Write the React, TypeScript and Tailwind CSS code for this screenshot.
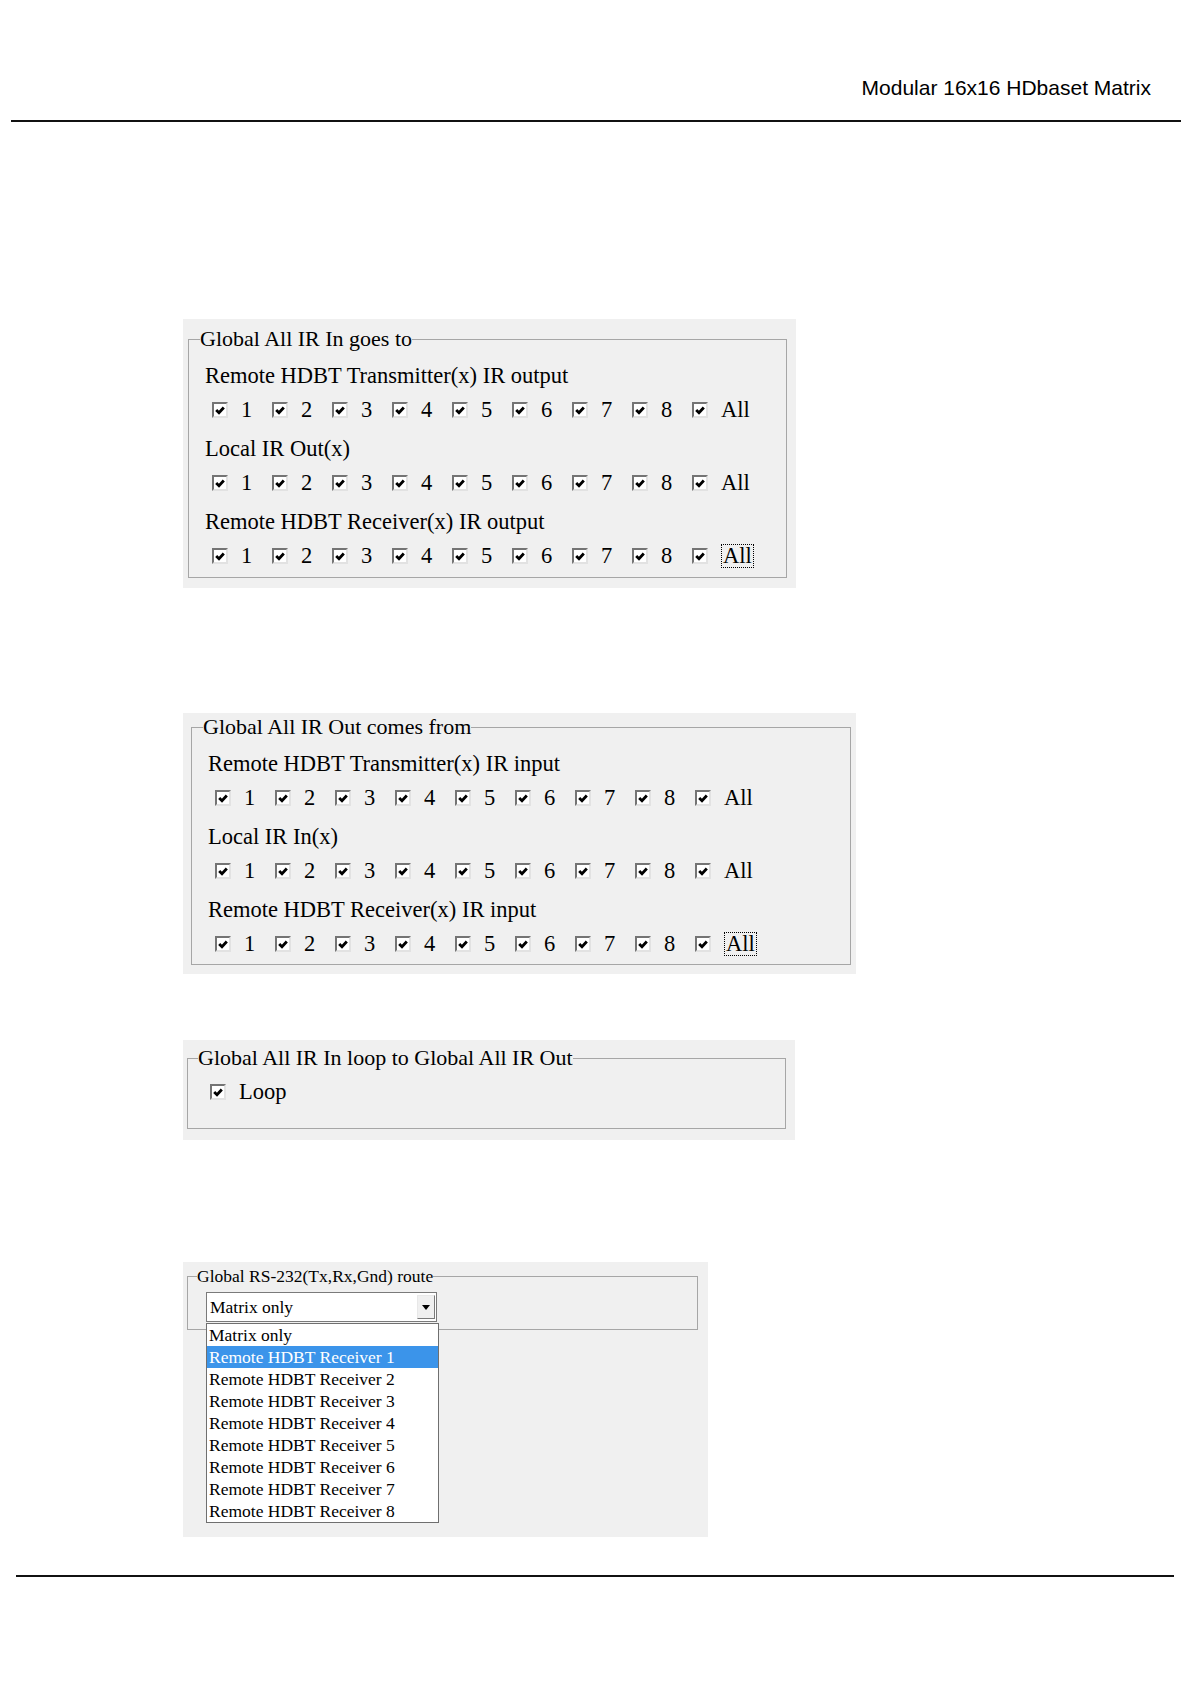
import React from "react";

const items = ["1", "2", "3", "4", "5", "6", "7", "8", "All"];

function Box() {
  return (
    <span className="inline-flex h-[16px] w-[16px] shrink-0 items-center justify-center border-2 border-t-[#747474] border-l-[#747474] border-r-[#e2e2e2] border-b-[#e2e2e2] bg-white">
      <svg width="10" height="9" viewBox="0 0 10 9">
        <path d="M1.2 4 L4 6.8 L8.8 1.5" stroke="#000" strokeWidth="2.8" fill="none" />
      </svg>
    </span>
  );
}

function CheckRow({ focus }: { focus?: boolean }) {
  return (
    <div className="flex h-[34px] items-center pl-[12px]">
      {items.map((it) => (
        <div key={it} className="flex w-[60px] items-center gap-[13px]">
          <Box />
          {it === "All" && focus ? (
            <span className="border border-dotted border-black px-[1px] leading-[22px]">All</span>
          ) : (
            <span className="leading-[22px]">{it}</span>
          )}
        </div>
      ))}
    </div>
  );
}

function Group({ title, focus }: { title: string; focus?: boolean }) {
  return (
    <div>
      <div className="flex h-[34px] items-center pl-[5px]">{title}</div>
      <CheckRow focus={focus} />
    </div>
  );
}

export default function App() {
  return (
    <div className="min-h-[1684px] w-[1191px] bg-white font-['Liberation_Serif','Times_New_Roman',serif] text-black">
      {/* header */}
      <div className="pt-[76px]">
        <div className="pr-[40px] text-right font-['Liberation_Sans',Arial,sans-serif] text-[21px] leading-[24px]">
          Modular 16x16 HDbaset Matrix
        </div>
      </div>
      <div className="ml-[11px] mt-[20px] h-[2px] w-[1170px] bg-[#111]" />

      <div className="pl-[183px]">
        {/* Panel 1 */}
        <div className="mt-[197px] w-[613px] bg-[#f0f0f0] pb-[10px] pl-[5px] pr-[9px] pt-[8px] text-[22.5px]">
          <fieldset className="border border-[#a6a6a6] pb-[4px] pl-[11px]">
            <legend className="text-[22px] leading-[24px]">Global All IR In goes to</legend>
            <div className="flex flex-col gap-[5px] pt-[8px]">
              <Group title="Remote HDBT Transmitter(x) IR output" />
              <Group title="Local IR Out(x)" />
              <Group title="Remote HDBT Receiver(x) IR output" focus />
            </div>
          </fieldset>
        </div>

        {/* Panel 2 */}
        <div className="mt-[125px] w-[673px] bg-[#f0f0f0] pb-[9px] pl-[8px] pr-[5px] pt-[2px] text-[22.5px]">
          <fieldset className="border border-[#a6a6a6] pb-[3px] pl-[11px]">
            <legend className="text-[22px] leading-[24px]">Global All IR Out comes from</legend>
            <div className="flex flex-col gap-[5px] pt-[8px]">
              <Group title="Remote HDBT Transmitter(x) IR input" />
              <Group title="Local IR In(x)" />
              <Group title="Remote HDBT Receiver(x) IR input" focus />
            </div>
          </fieldset>
        </div>

        {/* Panel 3 */}
        <div className="mt-[66px] w-[612px] bg-[#f0f0f0] pb-[11px] pl-[4px] pr-[9px] pt-[6px] text-[22.5px]">
          <fieldset className="border border-[#a6a6a6] pb-[19px] pl-[10px]">
            <legend className="text-[22px] leading-[24px]">Global All IR In loop to Global All IR Out</legend>
            <div className="pt-[5px]">
              <div className="flex h-[34px] items-center gap-[13px] pl-[12px]">
                <Box />
                <span>Loop</span>
              </div>
            </div>
          </fieldset>
        </div>

        {/* Panel 4 */}
        <div className="relative mt-[122px] w-[525px] bg-[#f0f0f0] pb-[207px] pl-[4px] pr-[10px] pt-[4px] text-[17.5px]">
          <fieldset className="border border-[#a6a6a6] pb-[7px] pl-[9px]">
            <legend className="text-[17.5px] leading-[20px]">Global RS-232(Tx,Rx,Gnd) route</legend>
            <div className="pl-[9px] pt-[6px]">
              <div className="relative flex h-[30px] w-[231px] items-center border border-[#7a7a7a] bg-white">
                <span className="pl-[3px] leading-[22px]">Matrix only</span>
                <div className="absolute bottom-[2px] right-[1px] top-[2px] flex w-[18px] items-center justify-center border border-t-[#e8e8e8] border-l-[#e8e8e8] border-r-[#7a7a7a] border-b-[#7a7a7a] bg-[#f0f0f0]">
                  <svg width="8" height="5" viewBox="0 0 8 5">
                    <path d="M0 0 H8 L4 5 Z" fill="#000" />
                  </svg>
                </div>
                <div className="absolute left-[-1px] top-[30px] z-10 w-[233px] border border-[#6f6f6f] bg-white">
                  {[
                    "Matrix only",
                    "Remote HDBT Receiver 1",
                    "Remote HDBT Receiver 2",
                    "Remote HDBT Receiver 3",
                    "Remote HDBT Receiver 4",
                    "Remote HDBT Receiver 5",
                    "Remote HDBT Receiver 6",
                    "Remote HDBT Receiver 7",
                    "Remote HDBT Receiver 8",
                  ].map((t, i) => (
                    <div
                      key={t}
                      className={
                        i === 1
                          ? "flex h-[22px] items-center bg-[#3b94ea] pl-[2px] text-white"
                          : "flex h-[22px] items-center pl-[2px]"
                      }
                    >
                      {t}
                    </div>
                  ))}
                </div>
              </div>
            </div>
          </fieldset>
        </div>
      </div>

      <div className="ml-[16px] mt-[38px] h-[2px] w-[1158px] bg-[#111]" />
    </div>
  );
}
